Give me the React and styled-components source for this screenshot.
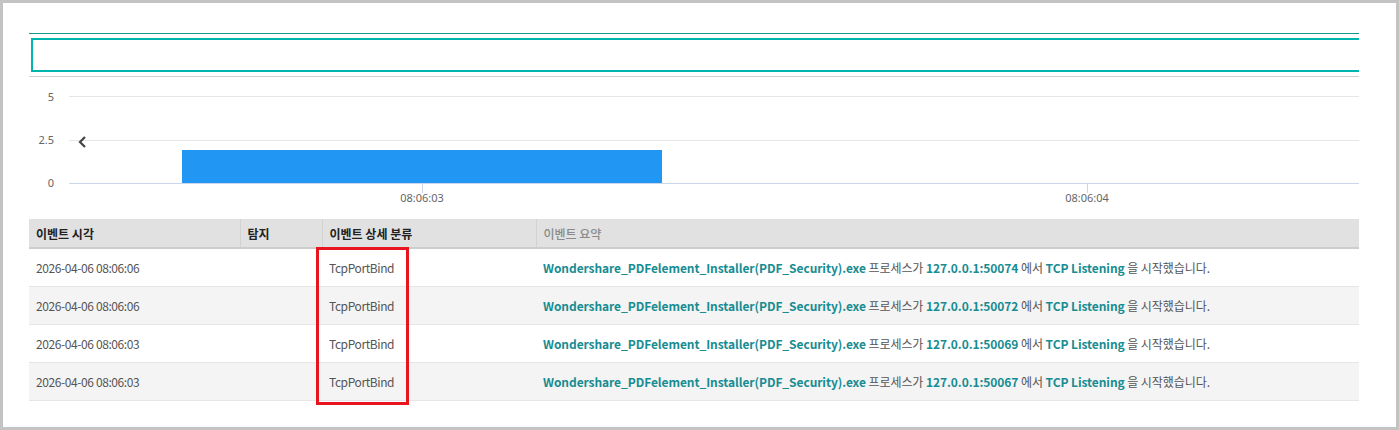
import React from "react";
import styled, { createGlobalStyle } from "styled-components";

const rows = [
  { time: "2026-04-06 08:06:06", type: "TcpPortBind", addr: "127.0.0.1:50074" },
  { time: "2026-04-06 08:06:06", type: "TcpPortBind", addr: "127.0.0.1:50072" },
  { time: "2026-04-06 08:06:03", type: "TcpPortBind", addr: "127.0.0.1:50069" },
  { time: "2026-04-06 08:06:03", type: "TcpPortBind", addr: "127.0.0.1:50067" },
];

const columns = [
  { label: "이벤트 시각", width: 211 },
  { label: "탐지", width: 82 },
  { label: "이벤트 상세 분류", width: 214 },
  { label: "이벤트 요약", muted: true },
];

function EventChart() {
  return (
    <ChartSvg width="1330" height="140" viewBox="0 0 1330 140">
      <line x1="40" x2="1330" y1="19.5" y2="19.5" stroke="#e6e6e6" />
      <line x1="40" x2="1330" y1="63.5" y2="63.5" stroke="#e6e6e6" />
      <text x="25" y="24" textAnchor="end">5</text>
      <text x="25" y="67" textAnchor="end">2.5</text>
      <text x="25" y="110" textAnchor="end">0</text>
      <rect x="153" y="73" width="480" height="33.5" fill="#2196f3" />
      <line x1="40" x2="1330" y1="106.5" y2="106.5" stroke="#ccd6eb" />
      <line x1="393.5" x2="393.5" y1="106.5" y2="116" stroke="#ccd6eb" />
      <line x1="1058.5" x2="1058.5" y1="106.5" y2="116" stroke="#ccd6eb" />
      <text x="393" y="125" textAnchor="middle">08:06:03</text>
      <text x="1058" y="125" textAnchor="middle">08:06:04</text>
      <path d="M56 60 L51 65 L56 70" fill="none" stroke="#444" strokeWidth="2.2" />
    </ChartSvg>
  );
}

export default function App() {
  return (
    <>
      <GlobalStyle />
      <Frame>
        <TopLine />
        <SearchWrap>
          <SearchBox />
        </SearchWrap>
        <Divider />
        <EventChart />
        <TableWrap>
          <Table>
            <colgroup>
              {columns.map((c) => (
                <col key={c.label} style={c.width ? { width: c.width } : undefined} />
              ))}
            </colgroup>
            <thead>
              <tr>
                {columns.map((c) => (
                  <Th key={c.label} $muted={c.muted}>{c.label}</Th>
                ))}
              </tr>
            </thead>
            <tbody>
              {rows.map((r, i) => (
                <Row key={i} $odd={i % 2 === 1}>
                  <Td>{r.time}</Td>
                  <Td></Td>
                  <Td>{r.type}</Td>
                  <Td $summary>
                    <Strong>Wondershare_PDFelement_Installer(PDF_Security).exe</Strong> 프로세스가{" "}
                    <Strong>{r.addr}</Strong> 에서 <Strong>TCP Listening</Strong> 을 시작했습니다.
                  </Td>
                </Row>
              ))}
            </tbody>
          </Table>
          <Highlight />
        </TableWrap>
      </Frame>
    </>
  );
}

const GlobalStyle = createGlobalStyle`
  body {
    margin: 0;
    background: #fff;
    font-family: "Noto Sans CJK KR", "Noto Sans", sans-serif;
  }
`;

const Frame = styled.div`
  box-sizing: border-box;
  width: 1399px;
  height: 430px;
  border: 3px solid #c3c3c3;
  padding: 30px 37px 0 26px;
  background: #fff;
  overflow: hidden;
`;

const TopLine = styled.div`
  height: 1px;
  background: #14998f;
`;

const SearchWrap = styled.div`
  margin-top: 4px;
  overflow: hidden;
`;

const SearchBox = styled.div`
  box-sizing: border-box;
  margin-left: 2px;
  width: calc(100% + 20px);
  height: 34px;
  border: 2px solid #00b5ad;
`;

const Divider = styled.div`
  margin-top: 4px;
  height: 1px;
  background: #cfcfcf;
`;

const ChartSvg = styled.svg`
  display: block;
  font-family: "Noto Sans", sans-serif;
  font-size: 11px;

  text {
    fill: #666;
  }
`;

const TableWrap = styled.div`
  position: relative;
  margin-top: 2px;
`;

const Table = styled.table`
  width: 100%;
  border-collapse: collapse;
  table-layout: fixed;
  font-size: 12px;
`;

const Th = styled.th`
  height: 28px;
  padding: 0 7px;
  text-align: left;
  background: #e1e1e1;
  border-bottom: 2px solid #cdcdcd;
  border-left: 1px solid #d2d2d2;
  color: ${(p) => (p.$muted ? "#8a8a8a" : "#222")};
  font-weight: ${(p) => (p.$muted ? 500 : 700)};

  &:first-child {
    border-left: none;
  }
`;

const Row = styled.tr`
  background: ${(p) => (p.$odd ? "#f4f4f4" : "#fff")};
`;

const Td = styled.td`
  height: 37px;
  padding: 0 7px;
  border-bottom: 1px solid #e6e6e6;
  color: #555;
  white-space: nowrap;
  letter-spacing: ${(p) => (p.$summary ? "-0.07px" : "-0.4px")};
`;

const Strong = styled.b`
  color: #178c92;
  font-weight: 700;
`;

const Highlight = styled.div`
  position: absolute;
  left: 287px;
  top: 28px;
  width: 93px;
  height: 158px;
  box-sizing: border-box;
  border: 3px solid #e8141e;
  pointer-events: none;
`;
